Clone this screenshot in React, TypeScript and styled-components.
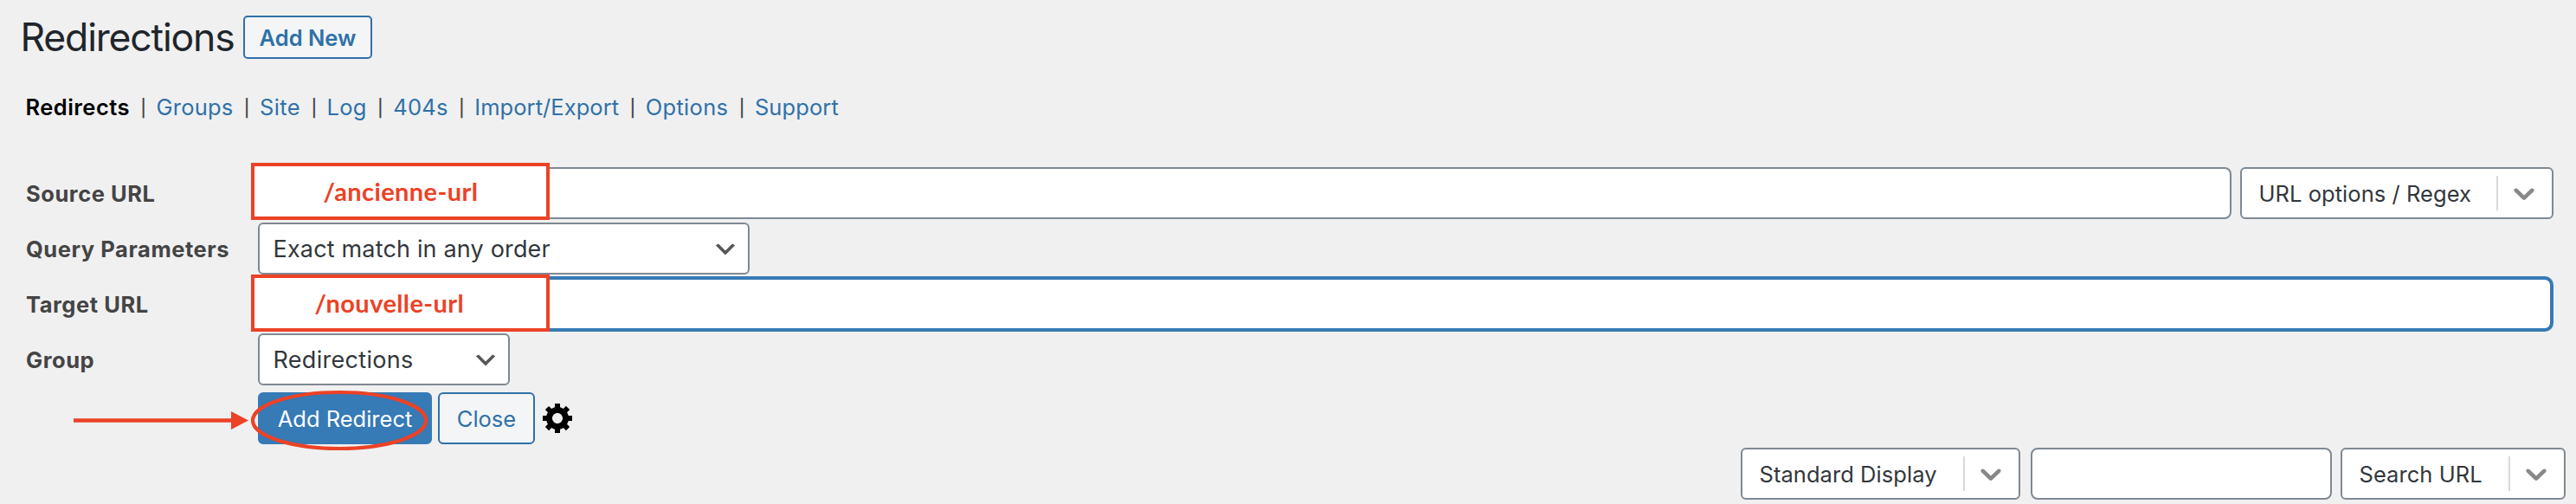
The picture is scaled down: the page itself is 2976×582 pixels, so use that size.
import React from "react";
import styled, { createGlobalStyle } from "styled-components";

const colors = {
  page: "#f0f0f1",
  link: "#2f71a8",
  primary: "#367ab6",
  border: "#7e8993",
  text: "#32373c",
  mark: "#ec4226",
};

const GlobalStyle = createGlobalStyle`
  * { box-sizing: border-box; }
  body {
    margin: 0;
    background: ${colors.page};
    color: ${colors.text};
    font-family: Inter, "Liberation Sans", sans-serif;
    font-size: 25.5px;
    line-height: 1.2;
    overflow: hidden;
  }
`;

const Page = styled.main`
  position: relative;
  height: 582px;
  padding: 18px 12px 0 0;
  white-space: nowrap;
`;

const Header = styled.header`
  display: flex;
  align-items: center;
  height: 50px;
  padding-left: 23.5px;
`;

const Title = styled.h1`
  margin: 0;
  padding-top: 2px;
  width: 257.5px;
  font-size: 44.5px;
  font-weight: 400;
  letter-spacing: -1.18px;
  color: #1f252b;
`;

const AddNew = styled.a`
  display: flex;
  align-items: center;
  justify-content: center;
  width: 149px;
  height: 50px;
  padding-top: 2px;
  border: 2px solid ${colors.link};
  border-radius: 5px;
  background: #f3f5f6;
  color: ${colors.link};
  font-weight: 600;
`;

const Nav = styled.nav`
  display: flex;
  align-items: center;
  height: 40px;
  margin: 36px 0 49px;
  padding-left: 29.5px;
`;

const NavLink = styled.a<{ $tracking: number; $current?: boolean }>`
  color: ${(p) => (p.$current ? "#000" : colors.link)};
  font-weight: ${(p) => (p.$current ? 600 : 400)};
  letter-spacing: ${(p) => p.$tracking}px;
`;

const Divider = styled.span`
  width: 30.6px;
  padding: 3px 0 0 1px;
  text-align: center;
  font-size: 19.5px;
  font-weight: 500;
  color: #444;
`;

const Form = styled.form`
  display: grid;
  grid-template-columns: 268px 1fr;
  grid-auto-rows: 60px;
  row-gap: 4px;
  margin: 0 14px 0 30px;
`;

const Label = styled.label`
  align-self: center;
  padding-top: 2px;
  font-weight: 700;
  letter-spacing: 0.55px;
  color: #444;
`;

const Field = styled.div`
  display: flex;
  gap: 10px;
`;

const TextInput = styled.input`
  flex: 1;
  min-width: 0;
  height: 60px;
  padding: 0 16px;
  border: 2px solid ${colors.border};
  border-radius: 8px;
  background: #fff;
  font: inherit;
  outline: none;
`;

const FocusedInput = styled(TextInput)`
  margin: 0 2px;
  border-color: ${colors.primary};
  box-shadow: 0 0 0 2px ${colors.primary};
`;

const NativeSelect = styled.div<{ $width: number; $tracking: number }>`
  display: flex;
  align-items: center;
  justify-content: space-between;
  width: ${(p) => p.$width}px;
  height: 60px;
  padding: 2px 10px 0 15.5px;
  border: 2px solid ${colors.border};
  border-radius: 6px;
  background: #fff;
  font-size: 27px;
  letter-spacing: ${(p) => p.$tracking}px;

  svg {
    width: 32px;
    height: 32px;
  }
`;

const MenuSelect = styled.div<{ $width: number }>`
  display: flex;
  align-items: center;
  width: ${(p) => p.$width}px;
  height: 60px;
  padding-left: 19.5px;
  border: 2px solid ${colors.border};
  border-radius: 6px;
  background: #fff;
  letter-spacing: 0.05px;
`;

const MenuValue = styled.span`
  padding-top: 2px;
`;

const MenuIndicator = styled.span`
  display: flex;
  align-items: center;
  justify-content: flex-end;
  width: 64px;
  height: 40px;
  margin-left: auto;
  padding-right: 12px;
  border-left: 2px solid #d9d9d9;

  svg {
    width: 40px;
    height: 40px;
  }
`;

const Actions = styled.div`
  grid-column: 2;
  display: flex;
  align-items: center;
  height: 60px;
  margin-top: 4px;
`;

const Button = styled.button<{ $primary?: boolean }>`
  width: ${(p) => (p.$primary ? 201 : 112)}px;
  height: 60px;
  margin-right: 7px;
  padding: 2px 0 0;
  border: 2px solid ${(p) => (p.$primary ? colors.primary : colors.link)};
  border-radius: 6px;
  background: ${(p) => (p.$primary ? colors.primary : "#f3f5f6")};
  color: ${(p) => (p.$primary ? "#fff" : colors.link)};
  font: inherit;
`;

const Gear = styled.svg`
  width: 40px;
  height: 40px;
  margin-top: -2px;
`;

const Toolbar = styled.div`
  display: flex;
  justify-content: flex-end;
  margin-top: 8px;
`;

const FilterInput = styled(TextInput)`
  flex: 0 0 348px;
  margin: 0 10px 0 12px;
`;

const Callout = styled.div<{ $top: number; $indent: number }>`
  position: absolute;
  left: 290px;
  top: ${(p) => p.$top}px;
  display: flex;
  align-items: center;
  width: 345px;
  height: 66px;
  padding-left: ${(p) => p.$indent}px;
  border: 4px solid ${colors.mark};
  background: #fff;
  color: ${colors.mark};
  font: 700 29px/1.2 Lato, sans-serif;
  letter-spacing: 0.4px;
`;

const Marks = styled.svg`
  position: absolute;
  left: 80px;
  top: 445px;
  width: 420px;
  height: 80px;
`;

const links = [
  { text: "Redirects", tracking: 0.46 },
  { text: "Groups", tracking: 0.21 },
  { text: "Site", tracking: 0.36 },
  { text: "Log", tracking: 0.25 },
  { text: "404s", tracking: 0.23 },
  { text: "Import/Export", tracking: 0.06 },
  { text: "Options", tracking: 0.3 },
  { text: "Support", tracking: 0.1 },
];

function SelectArrow() {
  return (
    <svg viewBox="0 0 20 20">
      <path d="M5 6l5 5 5-5 2 1-7 7-7-7 2-1z" fill="#555" />
    </svg>
  );
}

function Menu({ text, width }: { text: string; width: number }) {
  return (
    <MenuSelect $width={width}>
      <MenuValue>{text}</MenuValue>
      <MenuIndicator>
        <svg viewBox="0 0 20 20" fill="#888">
          <path d="M4.516 7.548c0.436-0.446 1.043-0.481 1.576 0l3.908 3.747 3.908-3.747c0.533-0.481 1.141-0.446 1.574 0 0.436 0.445 0.408 1.197 0 1.615-0.406 0.418-4.695 4.502-4.695 4.502-0.217 0.223-0.502 0.335-0.787 0.335s-0.57-0.112-0.789-0.335c0 0-4.287-4.084-4.695-4.502s-0.436-1.17 0-1.615z" />
        </svg>
      </MenuIndicator>
    </MenuSelect>
  );
}

export default function App() {
  return (
    <Page>
      <GlobalStyle />
      <Header>
        <Title>Redirections</Title>
        <AddNew>Add New</AddNew>
      </Header>

      <Nav>
        {links.map((link, i) => (
          <React.Fragment key={link.text}>
            {i > 0 && <Divider>|</Divider>}
            <NavLink $tracking={link.tracking} $current={i === 0}>
              {link.text}
            </NavLink>
          </React.Fragment>
        ))}
      </Nav>

      <Form>
        <Label>Source URL</Label>
        <Field>
          <TextInput />
          <Menu text="URL options / Regex" width={362} />
        </Field>
        <Label>Query Parameters</Label>
        <NativeSelect $width={568} $tracking={0.17}>
          Exact match in any order
          <SelectArrow />
        </NativeSelect>
        <Label>Target URL</Label>
        <Field>
          <FocusedInput />
        </Field>
        <Label>Group</Label>
        <NativeSelect $width={291} $tracking={0.3}>
          Redirections
          <SelectArrow />
        </NativeSelect>
        <Actions>
          <Button type="button" $primary>
            Add Redirect
          </Button>
          <Button type="button">Close</Button>
          <Gear viewBox="0 0 20 20">
            <path d="M18 12h-2.18c-.17.7-.44 1.35-.81 1.93l1.54 1.54-2.1 2.1-1.54-1.54c-.58.36-1.23.63-1.91.79V19H8v-2.18c-.68-.16-1.33-.43-1.91-.79l-1.54 1.54-2.12-2.12 1.54-1.54c-.36-.58-.63-1.23-.79-1.91H1V9.03h2.17c.16-.7.44-1.35.8-1.94L2.43 5.55l2.1-2.1 1.54 1.54c.58-.37 1.24-.64 1.93-.81V2h3v2.18c.68.16 1.33.43 1.91.79l1.54-1.54 2.12 2.12-1.54 1.54c.36.59.64 1.24.8 1.94H18V12zm-8.5 1.5c1.66 0 3-1.34 3-3s-1.34-3-3-3-3 1.34-3 3 1.34 3 3 3z" />
          </Gear>
        </Actions>
      </Form>

      <Toolbar>
        <Menu text="Standard Display" width={323} />
        <FilterInput />
        <Menu text="Search URL" width={260} />
      </Toolbar>

      <Callout $top={188} $indent={79.5}>
        /ancienne-url
      </Callout>
      <Callout $top={317} $indent={69.5}>
        /nouvelle-url
      </Callout>
      <Marks viewBox="80 445 420 80">
        <path d="M85 485.5H270" stroke={colors.mark} strokeWidth="4.4" />
        <path d="M267 475L287 485.5L267 496Z" fill={colors.mark} />
        <ellipse cx="392" cy="485.5" rx="100" ry="32.5" fill="none" stroke={colors.mark} strokeWidth="4.2" />
      </Marks>
    </Page>
  );
}
